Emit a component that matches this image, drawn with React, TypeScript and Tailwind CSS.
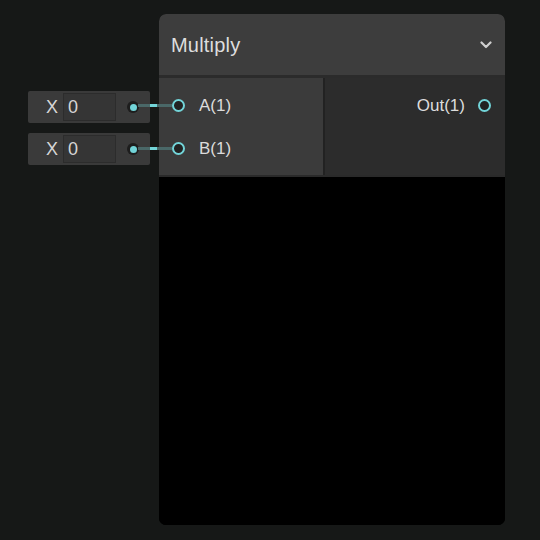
import React from "react";

const CYAN = "#72d4d8";

function InputChip({ top }: { top: number }) {
  return (
    <div
      className="absolute left-[28px] flex h-[32px] w-[122px] items-center rounded-[2px] bg-[#3a3a3a]"
      style={{ top }}
    >
      <span className="ml-[18px] w-[14px] text-[18px] leading-none text-[#d6d6d6]">X</span>
      <div className="ml-[3px] flex h-[28px] w-[53px] items-center border border-[#2c2c2c] bg-[#353535] pl-[4px] text-[18px] leading-none text-[#d6d6d6]">
        0
      </div>
      <div className="ml-[11px] flex h-[12px] w-[12px] items-center justify-center rounded-full bg-[#1d1d1d]">
        <div className="h-[7px] w-[7px] rounded-full" style={{ background: CYAN }} />
      </div>
    </div>
  );
}

function Port() {
  return <div className="h-[13px] w-[13px] rounded-full border-2 border-[#72d4d8] bg-[#222]" />;
}

function Wire({ y }: { y: number }) {
  return (
    <svg className="absolute left-[138px]" width="36" height="3" style={{ top: y - 1 }}>
      <rect x="0" y="0" width="34" height="3" fill="#4a6868" />
      <rect x="12" y="0" width="7" height="3" fill={CYAN} />
    </svg>
  );
}

export default function App() {
  return (
    <div
      className="relative h-[540px] w-[540px] overflow-hidden bg-[#161817]"
      style={{ fontFamily: '"Liberation Sans", Arial, sans-serif' }}
    >
      <div className="absolute left-[159px] top-[14px] flex h-[511px] w-[346px] flex-col overflow-hidden rounded-[7px] bg-black">
        <div className="flex h-[64px] shrink-0 items-center justify-between border-b-[3px] border-[#2b2b2b] bg-[#3d3d3d] pl-[12px] pr-[13px]">
          <span className="text-[20px] tracking-[0.2px] text-[#dedede]">Multiply</span>
          <svg width="12" height="8" viewBox="0 0 12 8">
            <path d="M1.5 1.5 L6 6 L10.5 1.5" fill="none" stroke="#cfcfcf" strokeWidth="2.2" strokeLinecap="round" strokeLinejoin="round" />
          </svg>
        </div>
        <div className="flex h-[99px] shrink-0 border-b-2 border-[#2a2a2a]">
          <div className="flex w-[166px] flex-col gap-[30px] border-r-2 border-[#222] bg-[#3b3b3b] pl-[13px] pt-[21px]">
            <div className="flex h-[13px] items-center gap-[14px]">
              <Port />
              <span className="text-[17px] leading-none text-[#dcdcdc]">A(1)</span>
            </div>
            <div className="flex h-[13px] items-center gap-[14px]">
              <Port />
              <span className="text-[17px] leading-none text-[#dcdcdc]">B(1)</span>
            </div>
          </div>
          <div className="flex flex-1 flex-col bg-[#2c2c2c] pr-[14px] pt-[21px]">
            <div className="flex h-[13px] items-center justify-end gap-[13px]">
              <span className="text-[17px] leading-none text-[#dcdcdc]">Out(1)</span>
              <Port />
            </div>
          </div>
        </div>
        <div className="flex-1 bg-black" />
      </div>

      <InputChip top={91} />
      <InputChip top={133} />
      <Wire y={105} />
      <Wire y={148} />
    </div>
  );
}
